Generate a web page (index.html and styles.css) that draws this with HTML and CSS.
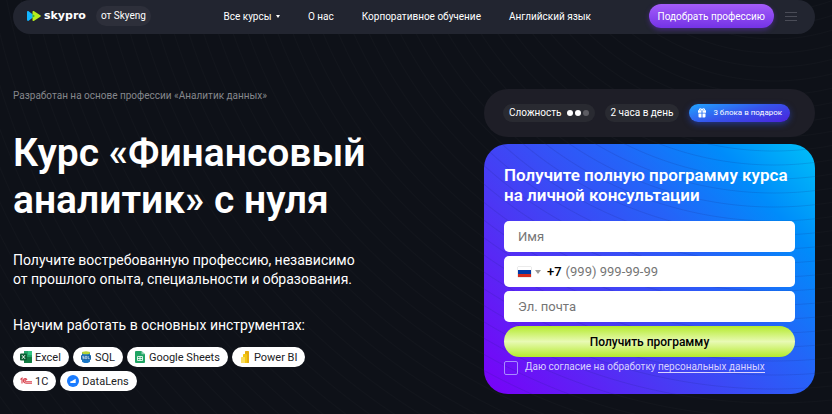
FILE: index.html
```html
<!DOCTYPE html>
<html lang="ru">
<head>
    <meta charset="UTF-8">
    <meta name="viewport" content="width=device-width, initial-scale=1.0">
    <link rel="stylesheet" href="styles.css">
    <title>Курс «Финансовый аналитик» с нуля</title>
</head>
<body>
    <!-- header -->
    <header class="header">
        <a href="#" class="logo">
            <svg class="logo-mark" viewBox="0 0 14 10">
                <path d="M0 1.200C0 .2.800-.2 1.600.3L8 5 1.600 9.700C.8 10.200 0 9.800 0 8.800z" fill="#12b5ff"/>
                <path d="M5.500 1C5.500 0 6.300-.3 7.100.2L13.300 4.200C13.900 4.600 13.900 5.400 13.300 5.800L7.100 9.800C6.300 10.300 5.500 10 5.500 9z" fill="#b6ee1c"/>
                <path d="M5.500 3.200L8 5 5.500 6.800z" fill="#28b44a"/>
            </svg>
            <span class="logo-text">skypro</span>
        </a>
        <span class="from">от Skyeng</span>
        <nav class="nav">
            <a href="#">Все курсы <span class="arrow"></span></a>
            <a href="#">О нас</a>
            <a href="#">Корпоративное обучение</a>
            <a href="#">Английский язык</a>
        </nav>
        <button class="pick">Подобрать профессию</button>
        <button class="burger" aria-label="Меню"><span></span><span></span><span></span></button>
    </header>

    <main class="main">
        <!-- course info -->
        <section class="info">
            <p class="based">Разработан на основе профессии «Аналитик данных»</p>
            <h1>Курс «Финансовый<br>аналитик» с нуля</h1>
            <p class="text">Получите востребованную профессию, независимо<br>от прошлого опыта, специальности и образования.</p>
            <p class="text">Научим работать в основных инструментах:</p>
            <ul class="tools">
                <li>
                    <svg viewBox="0 0 12 12"><path d="M4 0h7a1 1 0 0 1 1 1v10a1 1 0 0 1-1 1H4z" fill="#21a366"/><path d="M8 0h3a1 1 0 0 1 1 1v3H8z" fill="#33c481"/><path d="M4 6h8v5a1 1 0 0 1-1 1H4z" fill="#107c41"/><rect y="2.500" width="7" height="7" rx="1" fill="#0b5f31"/><path d="M2 4.200l3 3.600M5 4.200L2 7.800" stroke="#fff"/></svg>
                    Excel
                </li>
                <li>
                    <svg viewBox="0 0 12 12"><path d="M2 1.500v9C2 11.400 4 12 6 12s4-.6 4-1.500v-9z" fill="#1976c5"/><ellipse cx="6" cy="1.700" rx="4" ry="1.500" fill="#b5d334"/><rect x="1" y="4" width="10" height="5" rx="1" fill="#1565a9"/><path d="M4.300 5.300H2.700v1.200h1.500v1.200H2.500M5.300 5.300h1.500v2.400H5.300zM8.200 5v2.700h1.500" fill="none" stroke="#fff" stroke-width=".6"/></svg>
                    SQL
                </li>
                <li>
                    <svg viewBox="0 0 12 12"><path d="M2 0h5.500L11 3.300V11a1 1 0 0 1-1 1H2a1 1 0 0 1-1-1V1a1 1 0 0 1 1-1z" fill="#1fa463"/><path d="M7.500 0L11 3.300H7.500z" fill="#8ed1b1"/><path d="M3.500 5.500h5v4h-5zM3.500 7.500h5M6 5.500v4" fill="none" stroke="#fff" stroke-width=".8"/></svg>
                    Google Sheets
                </li>
                <li>
                    <svg viewBox="0 0 12 12"><rect x="6" width="4" height="12" rx=".6" fill="#e6ad10"/><rect x="4" y="3" width="4" height="9" rx=".6" fill="#f2c811"/><rect x="2" y="6" width="4" height="6" rx=".6" fill="#f9dc5c"/></svg>
                    Power BI
                </li>
                <li>
                    <svg viewBox="0 0 12 12"><path d="M.5 4.500L2 3.200v5.300M7 4.800C6.300 3 3.400 3.200 3.400 5.600s1.800 2.600 3.300 2.600H12M6.200 5.400c-.6-.9-1.500-.4-1.400.4.100.8.800 1 1.500 1H12" fill="none" stroke="#d9434e" stroke-width="1.100"/></svg>
                    1C
                </li>
                <li>
                    <svg viewBox="0 0 12 12"><circle cx="6" cy="6" r="6" fill="#1a7cff"/><path d="M3.300 8V6.500L5 6l1.500-1 2.200-1.200V8z" fill="#fff"/></svg>
                    DataLens
                </li>
            </ul>
        </section>

        <!-- right column -->
        <section class="side">
            <div class="facts">
                <span class="fact">Сложность <span class="dots"><i></i><i></i><i class="off"></i></span></span>
                <span class="fact">2 часа в день</span>
                <span class="gift">
                    <svg viewBox="0 0 10 10"><path d="M5 2.500C4.500.5 2.200.3 2.400 2.300M5 2.500C5.500.5 7.800.3 7.600 2.300" fill="none" stroke="#fff" stroke-width="1.100"/><path d="M1 2.300h3.500v2.500H1zM5.500 2.300H9v2.500H5.500zM1.500 5.600h3V9.500h-2a1 1 0 0 1-1-1zM5.500 5.600h3v2.900a1 1 0 0 1-1 1h-2z" fill="#fff"/></svg>
                    3 блока в подарок
                </span>
            </div>

            <!-- form -->
            <form class="form">
                <h2>Получите полную программу курса<br>на личной консультации</h2>
                <input type="text" class="field" placeholder="Имя" aria-label="Имя">
                <div class="field phone">
                    <button type="button" class="country" aria-label="Россия">
                        <span class="flag"></span>
                        <span class="arrow"></span>
                    </button>
                    <label for="phone">+7</label>
                    <input type="tel" id="phone" placeholder="(999) 999-99-99">
                </div>
                <input type="email" class="field" placeholder="Эл. почта" aria-label="Эл. почта">
                <button type="submit" class="submit">Получить программу</button>
                <div class="agree">
                    <input type="checkbox" id="agree">
                    <label for="agree">Даю согласие на обработку <a href="#">персональных данных</a></label>
                </div>
            </form>
        </section>
    </main>
</body>
</html>
```
FILE: styles.css
```css
*{
    margin: 0;
    padding: 0;
    box-sizing: border-box;
    list-style-type: none;
}
body{
    min-height: 100vh;
    padding: 0 17px 0 13px;
    font-family: Roboto, sans-serif;
    color: white;
    background: repeating-radial-gradient(circle at 774px -156px, transparent 0 12px, rgba(255, 255, 255, 0.02) 13px, transparent 14px), #0e1118;
}
a{
    color: inherit;
    text-decoration: none;
}
button{
    font-family: inherit;
    border: none;
    cursor: pointer;
}
.arrow{
    display: inline-block;
    border: 3px solid transparent;
    border-top: 4px solid currentColor;
    border-bottom: none;
}

/* header */
.header{
    display: flex;
    align-items: center;
    height: 34px;
    padding: 0 18px 2px 14px;
    border-radius: 17px;
    background-color: #222530;
}
.logo{
    display: flex;
    align-items: center;
    gap: 3px;
}
.logo-mark{
    width: 14px;
    height: 10px;
}
.logo-text{
    font-family: "DejaVu Sans", sans-serif;
    font-size: 11px;
    line-height: 14px;
    font-weight: bold;
}
.from{
    margin-left: 10px;
    padding: 0 5px;
    border-radius: 10px;
    font-size: 10px;
    line-height: 20px;
    background-color: #2d2f3a;
}
.nav{
    display: flex;
    flex: 1;
    justify-content: center;
    gap: 28px;
    padding-left: 15px;
    font-size: 10px;
    white-space: nowrap;
}
.nav .arrow{
    margin-left: 2px;
    border-width: 3px 2px 0;
    vertical-align: middle;
}
.pick{
    height: 24px;
    padding: 0 9px;
    border-radius: 12px;
    font-size: 10px;
    color: white;
    background: linear-gradient(#a45cfa, #7433e6);
    box-shadow: 0 2px 5px rgba(116, 51, 230, 0.4);
}
.burger{
    display: flex;
    flex-direction: column;
    gap: 3px;
    width: 12px;
    margin-left: 11px;
    background: none;
}
.burger span{
    height: 1px;
    background-color: #4a4c57;
}

/* content */
.main{
    display: flex;
    justify-content: space-between;
    padding-top: 55px;
}
.info{
    width: 380px;
}
.based{
    font-size: 10px;
    line-height: 14px;
    color: #85878c;
}
h1{
    margin: 27px 0;
    font-size: 39px;
    line-height: 47px;
    font-weight: 600;
    white-space: nowrap;
}
.text{
    margin-bottom: 27px;
    font-size: 14px;
    line-height: 19px;
    white-space: nowrap;
}
.tools{
    display: flex;
    flex-wrap: wrap;
    gap: 4px;
    width: 300px;
    margin-top: -15px;
}
.tools li{
    display: flex;
    align-items: center;
    gap: 3px;
    height: 20px;
    padding: 0 8px 0 7px;
    border-radius: 10px;
    font-size: 11px;
    color: #202124;
    background-color: white;
}
.tools svg{
    width: 12px;
    height: 12px;
}

/* right column */
.side{
    width: 331px;
}
.facts{
    display: flex;
    align-items: center;
    gap: 10px;
    height: 48px;
    padding: 0 19px;
    border-radius: 24px;
    white-space: nowrap;
    background-color: #1e1e27;
}
.fact{
    display: flex;
    align-items: center;
    gap: 5px;
    padding: 0 6px;
    border-radius: 9px;
    font-size: 10px;
    line-height: 18px;
    background-color: #292a31;
}
.dots{
    display: flex;
    gap: 2px;
}
.dots i{
    width: 6px;
    height: 6px;
    border-radius: 50%;
    background-color: white;
}
.dots .off{
    background-color: #5d5d63;
}
.gift{
    display: flex;
    align-items: center;
    gap: 6px;
    padding: 0 8px;
    border-radius: 9px;
    font-size: 8px;
    line-height: 18px;
    background: linear-gradient(165deg, #20a5ff, #3654ec 50%, #4a22dc);
    box-shadow: 0 2px 6px rgba(40, 80, 240, 0.5);
}
.gift svg{
    width: 10px;
    height: 10px;
}

/* form */
.form{
    display: flex;
    flex-direction: column;
    gap: 4px;
    margin-top: 7px;
    padding: 21px 20px 19px;
    border-radius: 24px;
    background: repeating-radial-gradient(circle at 290px -300px, transparent 0 12px, rgba(20, 30, 120, 0.15) 13px, transparent 14px), linear-gradient(48deg, #7a00f8, #4b38f4 33%, #2563f8 62%, #008cfa 82%, #00c0f8);
}
h2{
    margin-bottom: 12px;
    font-size: 17px;
    line-height: 20px;
    font-weight: 600;
    white-space: nowrap;
}
.field{
    width: 100%;
    height: 31px;
    padding: 0 14px;
    border: none;
    border-radius: 5px;
    outline: none;
    font-family: inherit;
    font-size: 13px;
    color: black;
    background-color: white;
}
.field::placeholder, .phone input::placeholder{
    color: #757575;
}
.phone{
    display: flex;
    align-items: center;
}
.country{
    display: flex;
    align-items: center;
    gap: 4px;
    margin-right: 6px;
    color: #999;
    background: none;
}
.flag{
    width: 13px;
    height: 10px;
    background: linear-gradient(white 33%, #0039a6 33% 66%, #d52b1e 66%);
    box-shadow: 0 0 1px #888;
}
.phone label{
    margin-right: 4px;
    font-weight: 500;
}
.phone input{
    flex: 1;
    min-width: 0;
    border: none;
    outline: none;
    font-family: inherit;
    font-size: 13px;
    background: none;
}
.submit{
    height: 31px;
    border-radius: 16px;
    font-size: 12px;
    font-weight: 500;
    color: black;
    background: linear-gradient(#b4ea2c, #e8fab4 50%, #b4ea2c);
}
.agree{
    display: flex;
    gap: 7px;
    font-size: 10px;
    line-height: 12px;
    color: #d9d2ff;
    white-space: nowrap;
}
.agree input{
    appearance: none;
    width: 14px;
    height: 14px;
    border: 1px solid #a88cff;
    border-radius: 2px;
}
.agree input:checked{
    background-color: #b4ea2c;
}
.agree a{
    border-bottom: 1px solid #d9d2ff;
}
```
